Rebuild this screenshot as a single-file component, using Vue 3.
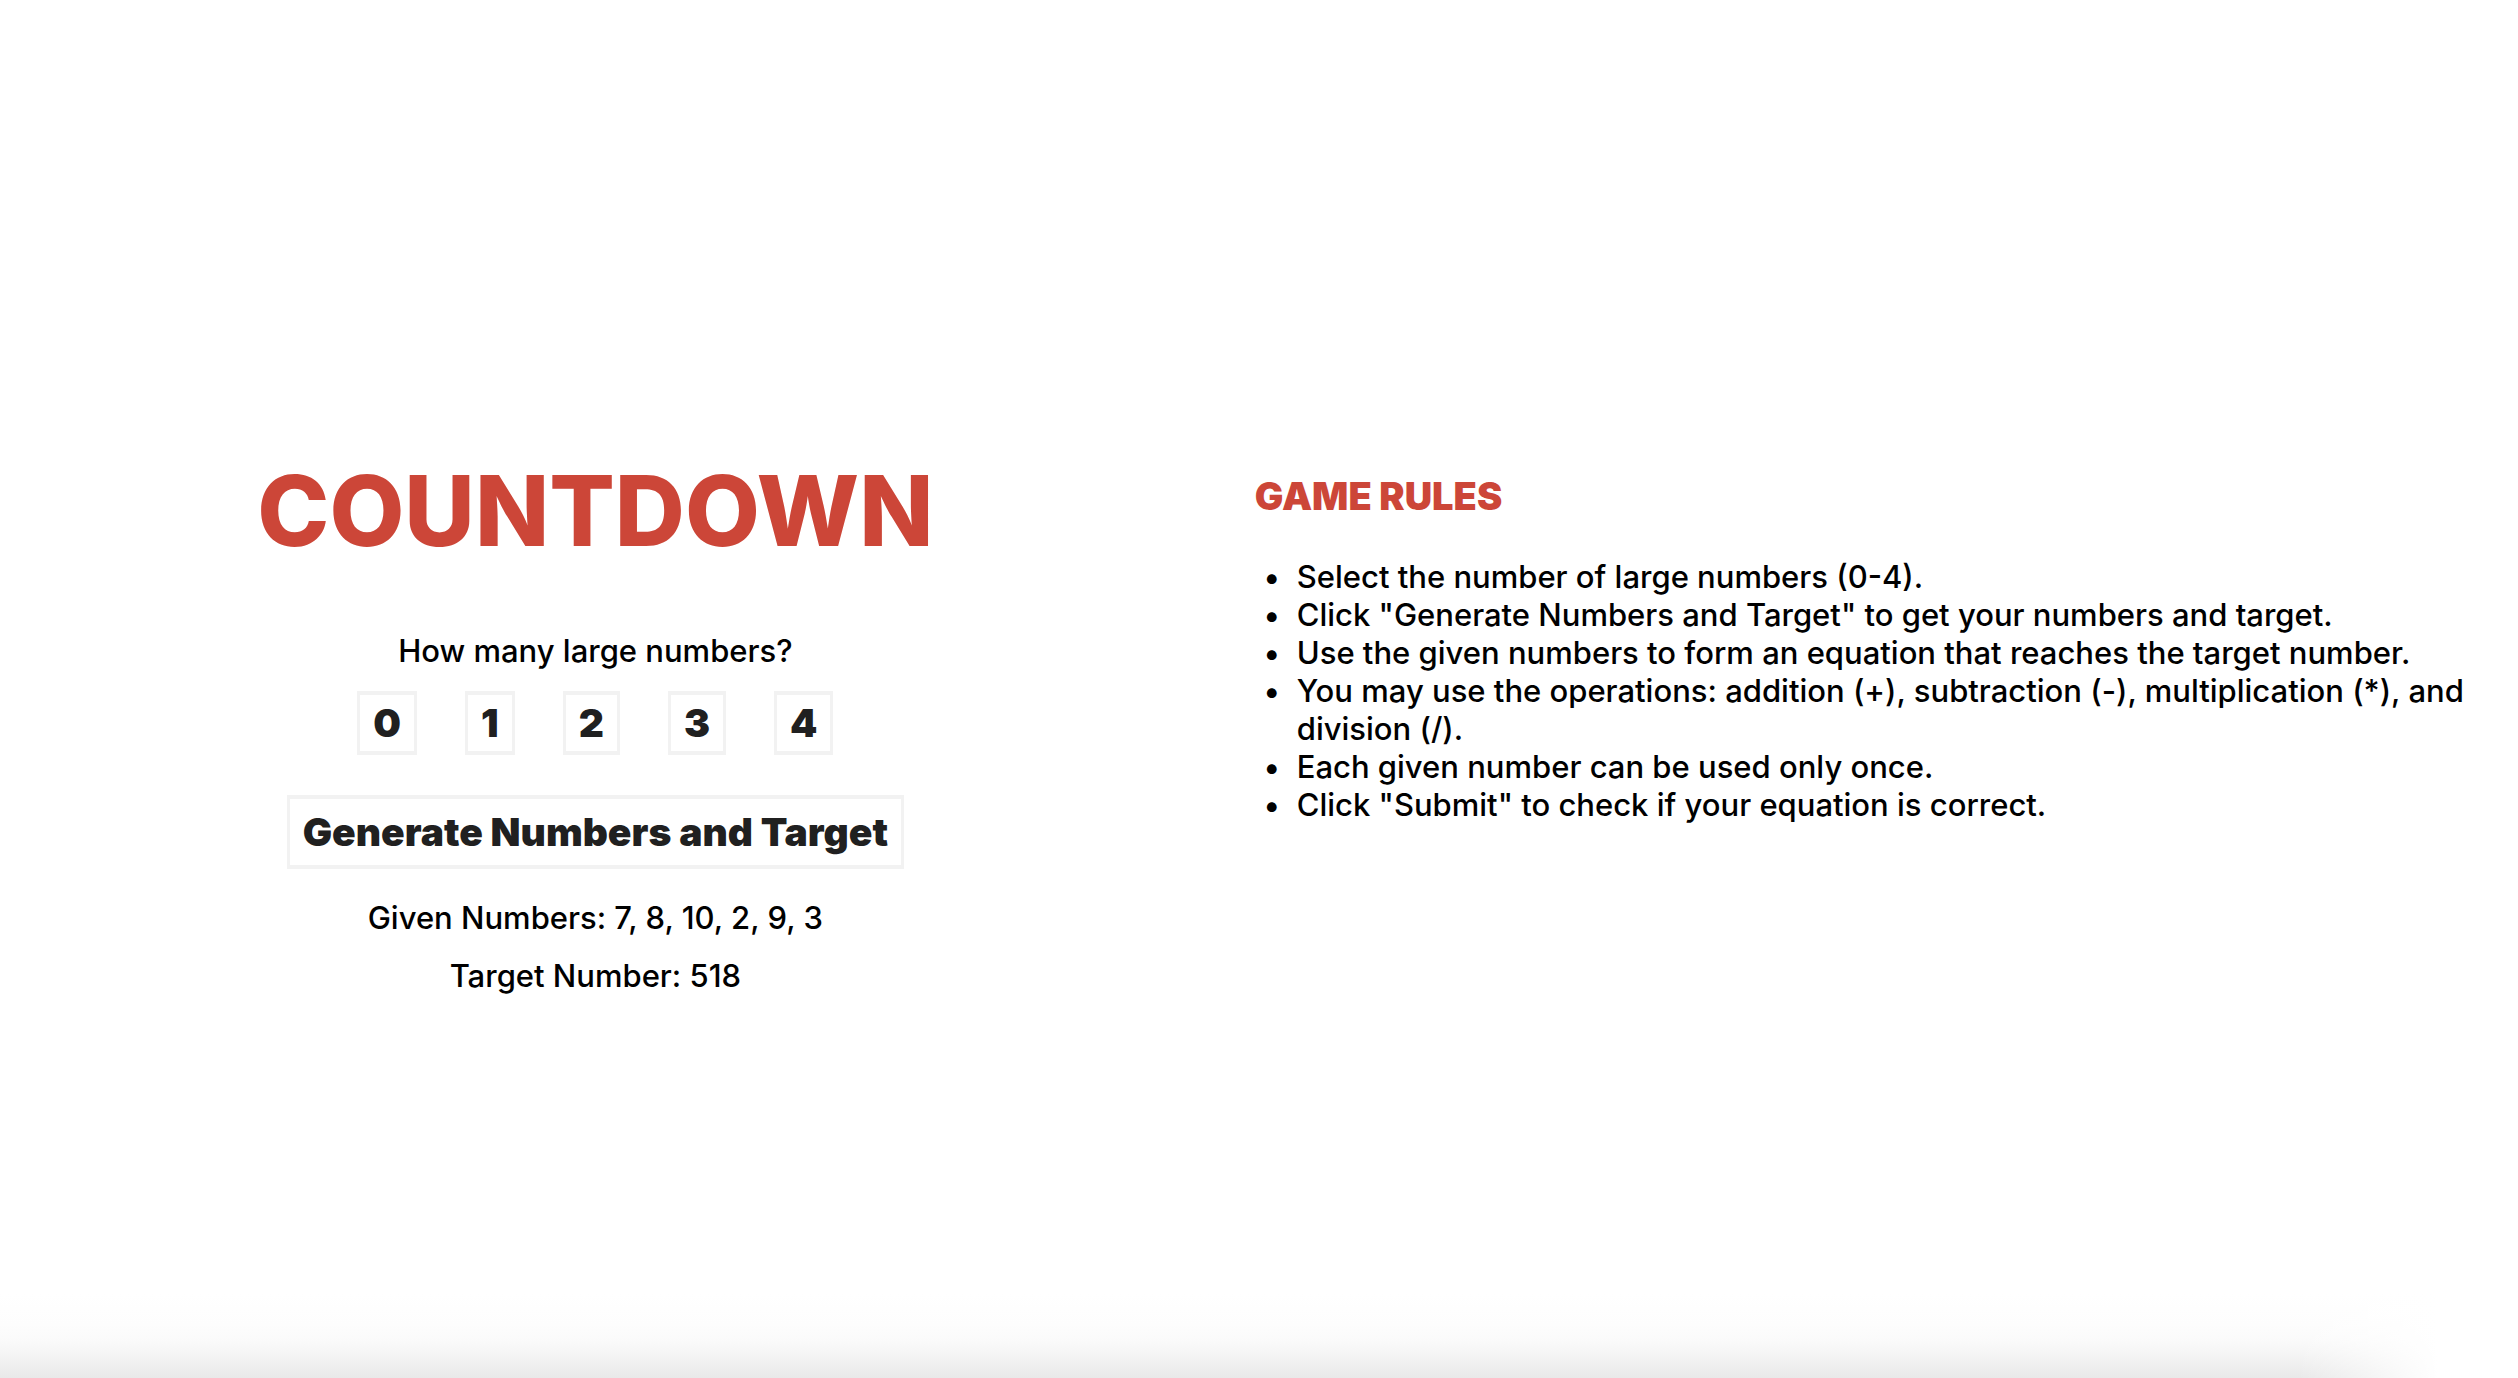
<script setup>
import { ref } from 'vue'
const counts = [0, 1, 2, 3, 4]
const given = ref([7, 8, 10, 2, 9, 3])
const target = ref(518)
const rules = [
  'Select the number of large numbers (0-4).',
  'Click "Generate Numbers and Target" to get your numbers and target.',
  'Use the given numbers to form an equation that reaches the target number.',
  'You may use the operations: addition (+), subtraction (-), multiplication (*), and division (/).',
  'Each given number can be used only once.',
  'Click "Submit" to check if your equation is correct.',
]
</script>

<template>
  <main class="page">
    <section class="game">
      <h1>COUNTDOWN</h1>
      <p class="prompt">How many large numbers?</p>
      <div class="counts">
        <button v-for="n in counts" :key="n" type="button">{{ n }}</button>
      </div>
      <button class="generate" type="button">Generate Numbers and Target</button>
      <p class="result">Given Numbers: {{ given.join(', ') }}</p>
      <p class="result">Target Number: {{ target }}</p>
    </section>
    <section class="rules">
      <h2>GAME RULES</h2>
      <ul>
        <li v-for="rule in rules" :key="rule">{{ rule }}</li>
      </ul>
    </section>
  </main>
</template>

<style>
body {
  margin: 0;
  background: #fff;
}
</style>

<style scoped>
.page {
  box-sizing: border-box;
  min-height: 100vh;
  padding-top: 462px;
  display: grid;
  grid-template-columns: minmax(0, 9fr) minmax(0, 10fr);
  font-family: 'Inter', sans-serif;
  font-size: 31px;
  font-weight: 500;
  line-height: 38px;
  color: #000;
  background:
    linear-gradient(to right, transparent calc(100% - 220px), #fff calc(100% - 80px)),
    linear-gradient(to top, #e9e9e9, #f2f2f2 18px, #fafafa 36px, #fdfdfd 54px, #fff 84px);
}
.game {
  display: flex;
  flex-direction: column;
  align-items: center;
  padding-right: 2px;
}
h1 {
  margin: 0 0 72px;
  font-size: 97px;
  line-height: 98px;
  font-weight: 800;
  color: #cc4638;
}
p {
  margin: 0;
}
.counts {
  display: flex;
  gap: 48px;
  margin: 21px 0 40px;
}
button {
  font-family: inherit;
  font-weight: 900;
  font-size: 39px;
  line-height: 48px;
  padding: 4px 13px;
  border: 4px solid #f2f2f2;
  border-width: 4px 3px;
  background: #fff;
  color: #202020;
}
.generate {
  margin-bottom: 30px;
  padding: 9px 13px;
}
.result {
  margin-bottom: 20px;
}
.rules {
  padding: 14px 20px 0 62px;
}
h2 {
  margin: 0 0 42px;
  font-size: 38px;
  line-height: 40px;
  font-weight: 900;
  color: #cc4638;
}
ul {
  margin: 0;
  padding-left: 42px;
  list-style-type: '•  ';
}
</style>
